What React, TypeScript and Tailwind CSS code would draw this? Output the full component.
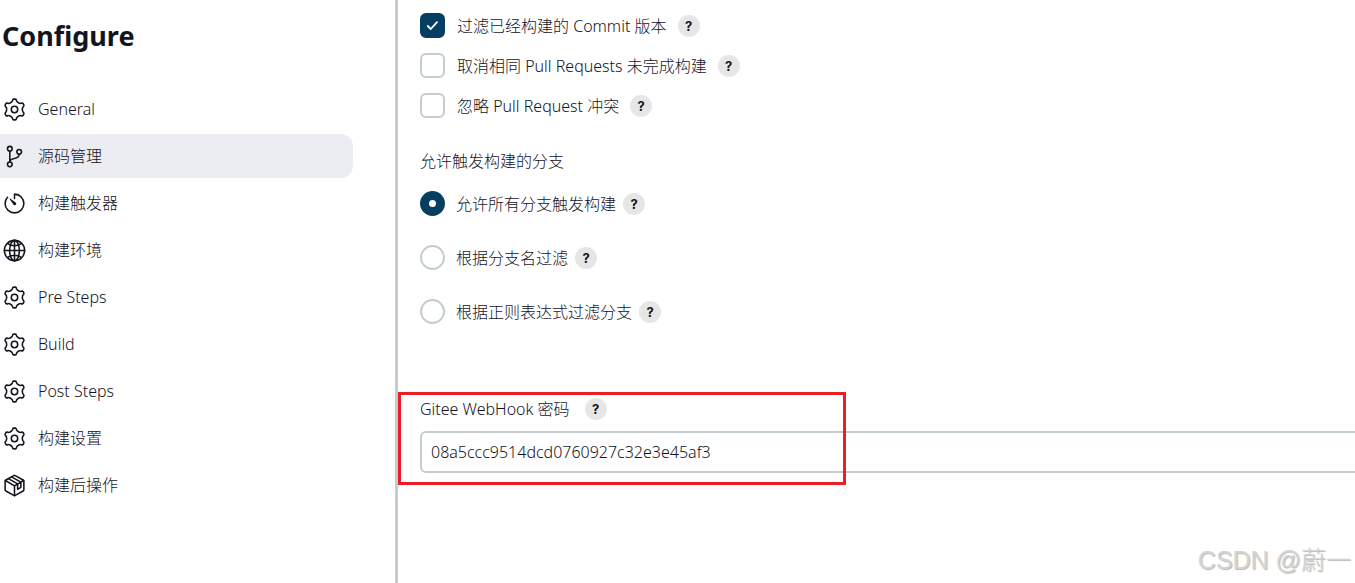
import type { ReactNode } from "react";

const icons: Record<string, ReactNode> = {
  gear: (
    <>
      <circle cx="256" cy="256" r="66" />
      <path d="M214 76Q220 44 242 44H270Q292 44 298 76C306 106 361 138 391 130Q422 119 433 138L447 162Q458 181 433 202C411 224 411 288 433 310Q458 331 447 350L433 374Q422 393 391 382C361 374 306 406 298 436Q292 468 270 468H242Q220 468 214 436C206 406 151 374 121 382Q90 393 79 374L65 350Q54 331 79 310C101 288 101 224 79 202Q54 181 65 162L79 138Q90 119 121 130C151 138 206 106 214 76z" />
    </>
  ),
  branch: (
    <>
      <circle cx="160" cy="96" r="48" />
      <circle cx="160" cy="416" r="48" />
      <circle cx="352" cy="160" r="48" />
      <path d="M160 368V144M352 208c0 128-192 48-192 160" />
    </>
  ),
  timer: (
    <>
      <path d="M112.91 128A191.85 191.85 0 0 0 64 254c-1.18 106.35 85.65 193.8 192 194 106.2.2 192-85.83 192-192 0-104.54-83.55-189.61-187.5-192a4.36 4.36 0 0 0-4.5 4.37V152" />
      <path
        d="M233.38 278.63l-79-113a8.13 8.13 0 0 1 11.32-11.32l113 79a32.5 32.5 0 0 1-37.25 53.26 33.21 33.21 0 0 1-8.07-7.94z"
        fill="currentColor"
        stroke="none"
      />
    </>
  ),
  globe: (
    <>
      <circle cx="256" cy="256" r="208" />
      <ellipse cx="256" cy="256" rx="100" ry="208" />
      <path d="M256 48v416M48 256h416M117 117c38 27 86 43 139 43s101-16 139-43M117 395c38-27 86-43 139-43s101 16 139 43" />
    </>
  ),
  box: (
    <>
      <path d="M448 341V171a32 32 0 0 0-16-28L272 54a32 32 0 0 0-32 0L80 143a32 32 0 0 0-16 28v170a32 32 0 0 0 16 28l160 89a32 32 0 0 0 32 0l160-89a32 32 0 0 0 16-28z" />
      <path d="M69 153l187 110 187-110M256 463V263M130 116l190 108v110l66-40V188L194 78" />
    </>
  ),
};

const sections = [
  { label: "General", icon: "gear" },
  { label: "源码管理", icon: "branch", active: true },
  { label: "构建触发器", icon: "timer" },
  { label: "构建环境", icon: "globe" },
  { label: "Pre Steps", icon: "gear" },
  { label: "Build", icon: "gear" },
  { label: "Post Steps", icon: "gear" },
  { label: "构建设置", icon: "gear" },
  { label: "构建后操作", icon: "box" },
];

const filters = [
  { id: "skip-built", label: "过滤已经构建的 Commit 版本", checked: true },
  { id: "cancel-same", label: "取消相同 Pull Requests 未完成构建", checked: false },
  { id: "skip-conflict", label: "忽略 Pull Request 冲突", checked: false },
];

const branches = [
  { id: "branch-all", label: "允许所有分支触发构建" },
  { id: "branch-name", label: "根据分支名过滤" },
  { id: "branch-regex", label: "根据正则表达式过滤分支" },
];

function Help() {
  return (
    <button
      type="button"
      aria-label="Help"
      className="flex h-[22px] w-[22px] shrink-0 items-center justify-center rounded-full bg-[#e6e6e6] font-['Inter',sans-serif] text-[13px] font-bold"
    >
      ?
    </button>
  );
}

function Sidebar() {
  return (
    <aside className="w-[395px] shrink-0 pt-4">
      <h1 className="pl-0.5 text-[27px] leading-10 font-bold">Configure</h1>
      <nav className="mt-[31px] mr-[42px] flex flex-col gap-[3px]">
        {sections.map((s) => (
          <a
            key={s.label}
            href="#"
            className={
              s.active
                ? "flex h-11 items-center gap-[11px] rounded-r-xl bg-[#ecedf3] pl-[2px]"
                : "flex h-11 items-center gap-[11px] pl-[2px]"
            }
          >
            <svg
              viewBox="0 0 512 512"
              className="h-[25px] w-[25px]"
              fill="none"
              stroke="currentColor"
              strokeWidth="32"
              strokeLinecap="round"
              strokeLinejoin="round"
            >
              {icons[s.icon]}
            </svg>
            {s.label}
          </a>
        ))}
      </nav>
    </aside>
  );
}

export default function App() {
  return (
    <div className="relative flex min-h-screen overflow-hidden bg-white font-['Noto_Sans','Noto_Sans_CJK_SC',sans-serif] text-base leading-6 font-light text-[#14141f]">
      <Sidebar />
      <main className="min-w-0 flex-1 border-l-3 border-[#c3cccf] pt-[13px] pl-[22px]">
        <div className="flex flex-col gap-[15px]">
          {filters.map((f) => (
            <div key={f.id} className="flex h-[25px] items-center">
              <span className="relative flex h-[25px] w-[25px]">
                <input
                  id={f.id}
                  type="checkbox"
                  defaultChecked={f.checked}
                  className="peer h-[25px] w-[25px] appearance-none rounded-md border-2 border-[#c3cccf] checked:border-[#063e61] checked:bg-[#063e61]"
                />
                <svg
                  viewBox="0 0 25 25"
                  className="pointer-events-none absolute inset-0 hidden peer-checked:block"
                  fill="none"
                  stroke="white"
                  strokeWidth="1.8"
                  strokeLinecap="round"
                  strokeLinejoin="round"
                >
                  <path d="M7.8 13l3 3 6.2-6.8" />
                </svg>
              </span>
              <label htmlFor={f.id} className="mr-[11px] ml-3">
                {f.label}
              </label>
              <Help />
            </div>
          ))}
        </div>

        <fieldset className="mt-[31px]">
          <legend>允许触发构建的分支</legend>
          <div className="mt-[18px] flex flex-col gap-[29px]">
            {branches.map((b, i) => (
              <div key={b.id} className="flex h-[25px] items-center">
                <input
                  id={b.id}
                  type="radio"
                  name="branch"
                  defaultChecked={i === 0}
                  className="h-[25px] w-[25px] appearance-none rounded-full border-2 border-[#c3cccf] checked:border-9 checked:border-[#063e61]"
                />
                <label htmlFor={b.id} className="mr-[7px] ml-[11px]">
                  {b.label}
                </label>
                <Help />
              </div>
            ))}
          </div>
        </fieldset>

        <div className="relative mt-[73px]">
          <div className="flex items-center gap-[15px]">
            <label htmlFor="webhook">Gitee WebHook 密码</label>
            <Help />
          </div>
          <input
            id="webhook"
            type="text"
            defaultValue="08a5ccc9514dcd0760927c32e3e45af3"
            className="mt-[10px] -mr-2 h-[42px] w-[calc(100%+8px)] rounded-md border-2 border-[#c3cccf] px-[9px]"
          />
          {/* highlight frame over the webhook field */}
          <div className="pointer-events-none absolute -top-[5px] -left-[22px] h-[93px] w-[448px] border-3 border-[#ee1c25]" />
        </div>
      </main>
      <div className="absolute right-1 bottom-[7px] font-['Liberation_Sans','Noto_Sans_CJK_SC',sans-serif] text-[25px] leading-8 text-[#d4d4d4] [text-shadow:1px_1px_1px_#b8b8b8]">
        CSDN @蔚一
      </div>
    </div>
  );
}
